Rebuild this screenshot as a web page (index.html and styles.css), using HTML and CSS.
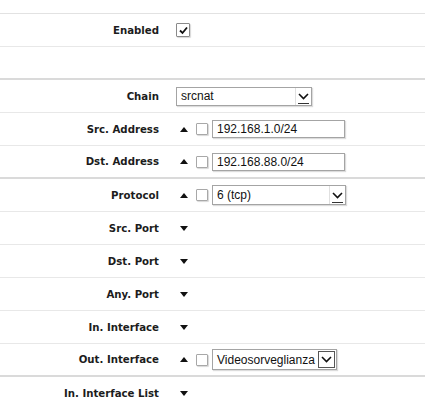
FILE: index.html
```html
<!DOCTYPE html>
<html>
<head>
<meta charset="utf-8">
<link rel="stylesheet" href="styles.css">
</head>
<body>
<div class="form">
  <div class="top"></div>

  <div class="row">
    <div class="label">Enabled</div>
    <span class="cb checked"><svg width="11" height="11" viewBox="0 0 11 11"><path d="M2 5.5 L4.5 8 L9 2.5" fill="none" stroke="#111" stroke-width="1.8"/></svg></span>
  </div>

  <div class="row sep"></div>

  <div class="row">
    <div class="label">Chain</div>
    <div class="select chain"><span class="val">srcnat</span><span class="btn line"><svg width="11" height="7" viewBox="0 0 11 7"><path d="M1 1 L5.5 5.5 L10 1" fill="none" stroke="#111" stroke-width="1.6"/></svg></span></div>
  </div>

  <div class="row">
    <div class="label">Src. Address</div>
    <span class="tri up"></span>
    <span class="cb"></span>
    <div class="text"><span class="val">192.168.1.0/24</span></div>
  </div>

  <div class="row sep">
    <div class="label">Dst. Address</div>
    <span class="tri up"></span>
    <span class="cb"></span>
    <div class="text"><span class="val">192.168.88.0/24</span></div>
  </div>

  <div class="row">
    <div class="label">Protocol</div>
    <span class="tri up"></span>
    <span class="cb"></span>
    <div class="select proto"><span class="val">6 (tcp)</span><span class="btn line"><svg width="11" height="7" viewBox="0 0 11 7"><path d="M1 1 L5.5 5.5 L10 1" fill="none" stroke="#111" stroke-width="1.6"/></svg></span></div>
  </div>

  <div class="row">
    <div class="label">Src. Port</div>
    <span class="tri down"></span>
  </div>

  <div class="row">
    <div class="label">Dst. Port</div>
    <span class="tri down"></span>
  </div>

  <div class="row">
    <div class="label">Any. Port</div>
    <span class="tri down"></span>
  </div>

  <div class="row">
    <div class="label">In. Interface</div>
    <span class="tri down"></span>
  </div>

  <div class="row sep">
    <div class="label">Out. Interface</div>
    <span class="tri up"></span>
    <span class="cb"></span>
    <div class="select iface"><span class="val">Videosorveglianza</span><span class="btn box"><svg width="11" height="7" viewBox="0 0 11 7"><path d="M1 1 L5.5 5.5 L10 1" fill="none" stroke="#111" stroke-width="1.6"/></svg></span></div>
  </div>

  <div class="row">
    <div class="label">In. Interface List</div>
    <span class="tri down"></span>
  </div>
</div>
</body>
</html>
```

FILE: styles.css
```css
html, body {
  margin: 0;
  padding: 0;
  background: #ffffff;
}

.form {
  width: 425px;
}

.top {
  height: 13px;
  border-bottom: 1px solid #e2e2e2;
}

.row {
  height: 32px;
  border-bottom: 1px solid #e8e8e8;
  display: flex;
  align-items: center;
}

.row.sep {
  height: 31px;
  border-bottom: 2px solid #dadada;
}

.label {
  width: 159px;
  flex: none;
  text-align: right;
  font-family: "DejaVu Sans", Verdana, sans-serif;
  font-weight: bold;
  font-size: 10.2px;
  color: #1c1c1c;
  margin-right: 21px;
}

.tri {
  width: 0;
  height: 0;
  border-left: 4px solid transparent;
  border-right: 4px solid transparent;
  margin-right: 8px;
  flex: none;
}

.tri.up {
  border-bottom: 5px solid #111;
}

.tri.down {
  border-top: 5px solid #111;
}

.cb {
  width: 10px;
  height: 10px;
  border: 1px solid #a8a8a8;
  border-radius: 1px;
  box-shadow: 1px 1px 1px #d8d8d8;
  background: #fff;
  margin-right: 4px;
  flex: none;
  display: flex;
  align-items: center;
  justify-content: center;
}

.row .label + .cb {
  margin-left: -4px;
}

.cb.checked {
  width: 12px;
  height: 12px;
  border-color: #8a8a8a;
}

.text, .select {
  font-family: "Liberation Sans", Arial, sans-serif;
  font-size: 12px;
  color: #111;
  background: #fff;
  border: 1px solid #a4a4a4;
  box-shadow: 1px 1px 1px #dcdcdc;
  display: flex;
  align-items: center;
  box-sizing: border-box;
  flex: none;
}

.text {
  width: 133px;
  height: 18px;
  padding-left: 4px;
}

.select {
  padding-left: 4px;
  justify-content: space-between;
}

.select.chain {
  width: 136px;
  height: 19px;
  margin-left: -4px;
}

.select.proto {
  width: 134px;
  height: 20px;
}

.select.iface {
  width: 125px;
  height: 21px;
  padding-right: 1px;
}

.val {
  white-space: nowrap;
}

.btn {
  display: flex;
  align-items: center;
  justify-content: center;
  flex: none;
}

.btn.line {
  width: 16px;
  height: 100%;
  border-left: 1px solid #e0e0e0;
  box-sizing: border-box;
  position: relative;
}

.btn.line::after {
  content: "";
  position: absolute;
  left: 2px;
  right: 2px;
  bottom: 1px;
  border-bottom: 1px solid #333;
}

.btn.box {
  width: 17px;
  height: 17px;
  border: 1px solid #555;
  box-sizing: border-box;
  background: #fff;
}
```
